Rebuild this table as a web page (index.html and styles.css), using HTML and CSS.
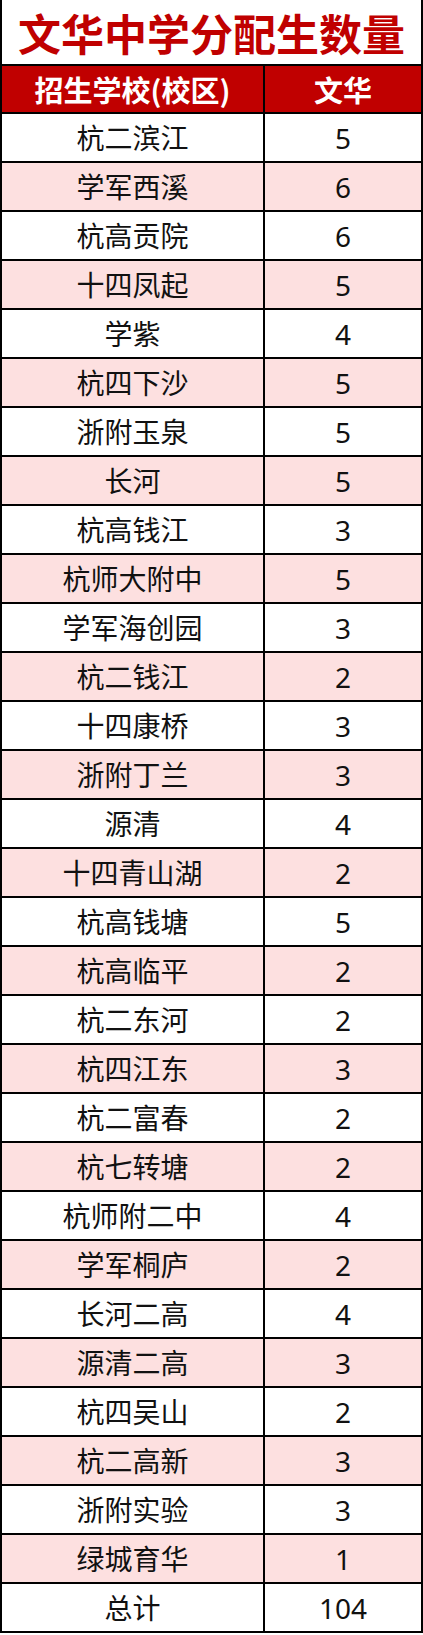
FILE: index.html
```html
<!DOCTYPE html>
<html lang="zh-CN">
<head>
<meta charset="utf-8">
<title>文华中学分配生数量</title>
<link rel="stylesheet" href="styles.css">
</head>
<body>
<div class="sheet">
  <div class="title">文华中学分配生数量</div>
  <div class="row head"><div class="c1">招生学校(校区)</div><div class="c2">文华</div></div>
  <div class="row"><div class="c1">杭二滨江</div><div class="c2">5</div></div>
  <div class="row pink"><div class="c1">学军西溪</div><div class="c2">6</div></div>
  <div class="row"><div class="c1">杭高贡院</div><div class="c2">6</div></div>
  <div class="row pink"><div class="c1">十四凤起</div><div class="c2">5</div></div>
  <div class="row"><div class="c1">学紫</div><div class="c2">4</div></div>
  <div class="row pink"><div class="c1">杭四下沙</div><div class="c2">5</div></div>
  <div class="row"><div class="c1">浙附玉泉</div><div class="c2">5</div></div>
  <div class="row pink"><div class="c1">长河</div><div class="c2">5</div></div>
  <div class="row"><div class="c1">杭高钱江</div><div class="c2">3</div></div>
  <div class="row pink"><div class="c1">杭师大附中</div><div class="c2">5</div></div>
  <div class="row"><div class="c1">学军海创园</div><div class="c2">3</div></div>
  <div class="row pink"><div class="c1">杭二钱江</div><div class="c2">2</div></div>
  <div class="row"><div class="c1">十四康桥</div><div class="c2">3</div></div>
  <div class="row pink"><div class="c1">浙附丁兰</div><div class="c2">3</div></div>
  <div class="row"><div class="c1">源清</div><div class="c2">4</div></div>
  <div class="row pink"><div class="c1">十四青山湖</div><div class="c2">2</div></div>
  <div class="row"><div class="c1">杭高钱塘</div><div class="c2">5</div></div>
  <div class="row pink"><div class="c1">杭高临平</div><div class="c2">2</div></div>
  <div class="row"><div class="c1">杭二东河</div><div class="c2">2</div></div>
  <div class="row pink"><div class="c1">杭四江东</div><div class="c2">3</div></div>
  <div class="row"><div class="c1">杭二富春</div><div class="c2">2</div></div>
  <div class="row pink"><div class="c1">杭七转塘</div><div class="c2">2</div></div>
  <div class="row"><div class="c1">杭师附二中</div><div class="c2">4</div></div>
  <div class="row pink"><div class="c1">学军桐庐</div><div class="c2">2</div></div>
  <div class="row"><div class="c1">长河二高</div><div class="c2">4</div></div>
  <div class="row pink"><div class="c1">源清二高</div><div class="c2">3</div></div>
  <div class="row"><div class="c1">杭四吴山</div><div class="c2">2</div></div>
  <div class="row pink"><div class="c1">杭二高新</div><div class="c2">3</div></div>
  <div class="row"><div class="c1">浙附实验</div><div class="c2">3</div></div>
  <div class="row pink"><div class="c1">绿城育华</div><div class="c2">1</div></div>
  <div class="row"><div class="c1">总计</div><div class="c2">104</div></div>
</div>
</body>
</html>
```
FILE: styles.css
```css
html, body {
  margin: 0;
  padding: 0;
  background: #ffffff;
}
.sheet {
  width: 423px;
  box-sizing: border-box;
  border-left: 2px solid #000;
  border-right: 2px solid #000;
  font-family: "Noto Sans", "Noto Sans CJK SC", sans-serif;
  color: #111;
}
.title {
  height: 64px;
  border-bottom: 2px solid #000;
  display: flex;
  align-items: center;
  justify-content: center;
  font-family: "Noto Sans CJK SC", sans-serif;
  font-weight: 700;
  font-size: 43px;
  color: #c00000;
  letter-spacing: 0;
}
.row {
  display: grid;
  grid-template-columns: 263px 1fr;
  height: 47px;
  border-bottom: 2px solid #000;
  font-size: 28px;
}
.row .c1, .row .c2 {
  display: flex;
  align-items: center;
  justify-content: center;
  line-height: 1;
}
.row .c1 {
  border-right: 2px solid #000;
}
.pink {
  background: #fde0e0;
}
.head {
  height: 46px;
  background: #c00000;
  color: #ffffff;
  font-family: "Noto Sans CJK SC", sans-serif;
  font-weight: 700;
  font-size: 29px;
}
```
